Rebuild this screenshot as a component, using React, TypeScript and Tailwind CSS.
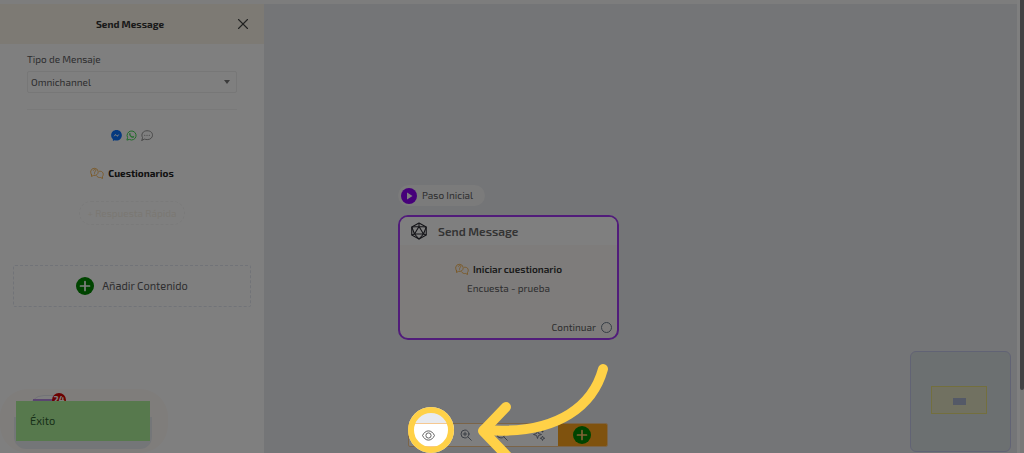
import type { ReactNode } from "react";
import { X } from "lucide-react";

const toolButton = "flex flex-1 items-center justify-center bg-white text-gray-500";

function QuestionBubbles() {
  return (
    <svg className="h-3 w-3.5 shrink-0" viewBox="0 0 28 24" fill="none" stroke="#f5ad45" strokeWidth="1.7" strokeLinejoin="round" strokeLinecap="round" aria-hidden="true">
      <path d="M3 15.5V19l4-2.2c5 1 9.500-2.300 9.500-7.300A7.700 7.700 0 0 0 1.500 8c-.3 3 .2 5.500 1.500 7.500Z" />
      <path d="M6.800 6.600c.8-2.600 5-2 4.700.6-.3 1.700-2.300 1.800-2.400 3.800M9.100 13.300v.3" />
      <path d="M19 8.500h1.500c3.500 0 6 2.700 6 6 0 1.800-.6 3.200-1.500 4.300V23l-3.600-2c-3.600.6-6.700-.6-8.200-3.300" />
    </svg>
  );
}

function PlusCircle() {
  return (
    <svg className="h-[18px] w-[18px] shrink-0" viewBox="0 0 18 18" aria-hidden="true">
      <circle cx="9" cy="9" r="9" fill="#008800" />
      <path d="M9 4.500v9M4.500 9h9" stroke="currentColor" strokeWidth="1.700" strokeLinecap="round" />
    </svg>
  );
}

function ChannelIcons() {
  return (
    <div className="flex items-center justify-center gap-1">
      <svg className="h-[11px] w-[11px]" viewBox="0 0 22 22" aria-hidden="true">
        <path d="M11 0C4.800 0 .3 4.500.3 10.500c0 3.200 1.300 5.900 3.500 7.800V22l3.300-1.400c1.200.4 2.500.6 3.900.6 6.200 0 10.700-4.600 10.700-10.700S17.200 0 11 0Z" fill="#0a72ff" />
        <path d="m4.800 13.300 3.800-5.400 3.600 3 4.800-3-3.800 5.600-3.700-3-4.700 2.800Z" fill="#fff" />
      </svg>
      <svg className="h-[11px] w-[11px]" viewBox="0 0 22 22" fill="none" aria-hidden="true">
        <path d="m1.800 20.200 1.400-5A9 9 0 1 1 6.700 18.800l-4.900 1.400Z" stroke="#43d854" strokeWidth="2" strokeLinejoin="round" />
        <path d="M7.200 6.200c.8-.8 1.500-.5 1.900.7.5 1.400.4 1.500-.4 2.600 1 1.900 2.200 2.900 3.900 3.500 1-1.300 1.200-1.400 2.500-.7 1.400.7 1.500.9.800 2.100-1.600 2.200-5 .9-7.300-1.500C6.200 10.500 5.600 7.900 7.200 6.200Z" fill="#43d854" />
      </svg>
      <svg className="h-[11px] w-3" viewBox="0 0 24 22" fill="none" stroke="#888" strokeWidth="1.800" strokeLinecap="round" strokeLinejoin="round" aria-hidden="true">
        <path d="M2 20.500 3 15C-.5 8.500 4 1.500 12 1.500S23 6 23 10.500s-4 8.700-10.500 8.700c-2 0-3.700-.3-5.200-1.100L2 20.500Z" />
        <path d="M7.500 10.500h.1M12 10.500h.1M16.500 10.500h.1" strokeWidth="2.400" />
      </svg>
    </div>
  );
}

function Icosahedron() {
  return (
    <svg className="h-[18px] w-[18px] shrink-0" viewBox="0 0 36 36" fill="none" stroke="#2b2b33" strokeWidth="2.200" strokeLinejoin="round" aria-hidden="true">
      <path d="M18 2 32.500 10v16L18 34 3.500 26V10L18 2Z" />
      <path d="m18 9 9 15H9l9-15ZM18 2v7M3.500 10 18 9l14.500 1M3.500 10 9 24l-5.500 2M32.500 10 27 24l5.500 2M9 24l9 10 9-10" />
    </svg>
  );
}

function Magnifier({ children }: { children?: ReactNode }) {
  return (
    <svg className="h-3 w-3" viewBox="0 0 24 24" fill="none" stroke="currentColor" strokeWidth="1.800" strokeLinecap="round" aria-hidden="true">
      <circle cx="10" cy="10" r="8" />
      <path d="m16 16 6.500 6.500M6.500 10h7" />
      {children}
    </svg>
  );
}

function Sidebar() {
  return (
    <aside className="relative flex w-[264px] shrink-0 flex-col bg-white">
      <header className="relative flex h-10 items-center justify-center bg-[#faf5e8] pr-1">
        <h1 className="text-[10px] font-bold text-[#333]">Send Message</h1>
        <button aria-label="Cerrar" className="absolute right-3 text-[#444]">
          <X className="h-[18px] w-[18px]" strokeWidth={1.5} />
        </button>
      </header>

      <div className="px-[27px] pt-[7px]">
        <label htmlFor="tipo" className="block text-[10px] leading-4">Tipo de Mensaje</label>
        <div className="relative mt-1">
          <select id="tipo" className="block h-[22px] w-full appearance-none rounded-xs border border-[#eee] bg-white px-[3px] text-[10px]">
            <option>Omnichannel</option>
          </select>
          <svg className="pointer-events-none absolute top-[9px] right-[7px] h-1 w-1.5" viewBox="0 0 6 4" aria-hidden="true">
            <path d="M0 0h6L3 4Z" fill="#777" />
          </svg>
        </div>
        <hr className="mt-4 border-[#f2f2f2]" />
      </div>

      <div className="mt-5">
        <ChannelIcons />
      </div>
      <h2 className="mt-6 flex items-center justify-center gap-1 text-[10px] leading-4 font-bold text-[#222]">
        <QuestionBubbles />
        Cuestionarios
      </h2>
      <button className="mx-auto mt-5 h-6 rounded-full border border-dashed border-[#f5f5f5] px-2 text-[10px] text-[#f5f0e6]">
        + Respuesta Rápida
      </button>
      <button className="mx-[13px] mt-10 flex h-[42px] items-center justify-center gap-2 rounded-xs border border-dashed border-[#e2e7f0] text-[11px]">
        <span className="text-white"><PlusCircle /></span>
        Añadir Contenido
      </button>

      {/* chat launcher, mostly hidden by the toast */}
      <div className="absolute bottom-0 left-0 h-16 w-[168px] rounded-[28px] bg-[#fffaf6]">
        <div className="absolute top-1.5 left-7 h-8 w-10 rounded-full border border-[#e4e6ec] bg-white" />
        <div className="absolute top-2.5 left-[33px] h-1 w-6 bg-[#b58ae0]" />
        <span className="absolute top-1 left-[52px] flex h-3.5 w-3.5 items-center justify-center rounded-full bg-[#d80000] text-[9px] font-bold text-white">24</span>
        <div className="absolute top-7 left-[14px] h-8 w-[138px] rounded-b-xl bg-[#e9edf1]" />
      </div>
      <div role="status" className="absolute bottom-3 left-4 flex h-10 w-[134px] items-center bg-[#aff29b] px-3.5 text-[11px] text-[#2f6030]">
        Éxito
      </div>
    </aside>
  );
}

function MessageNode() {
  return (
    <div className="absolute top-[181px] left-[134px] w-[221px]">
      <div className="flex h-[21px] w-[87px] items-center gap-[5px] rounded-full bg-[#f6f6f6] pl-[3px] text-[10px]">
        <svg className="h-4 w-4 shrink-0" viewBox="0 0 16 16" aria-hidden="true">
          <circle cx="8" cy="8" r="8" fill="#8d00f5" />
          <path d="M6 4.500v7L11.500 8Z" fill="#fff" />
        </svg>
        Paso Inicial
      </div>
      <article className="mt-[9px] flex h-[125px] flex-col overflow-hidden rounded-[10px] border-2 border-[#a338f5] bg-[#fcf9f6]">
        <header className="flex h-7 items-center gap-2.5 bg-white px-2.5">
          <Icosahedron />
          <h2 className="text-xs font-semibold text-[#666]">Send Message</h2>
        </header>
        <h3 className="mt-4 flex items-center justify-center gap-1 text-[10px] leading-4 font-semibold text-[#333]">
          <QuestionBubbles />
          Iniciar cuestionario
        </h3>
        <p className="mt-[3px] text-center text-[10px] leading-4">Encuesta - prueba</p>
        <footer className="mt-auto flex items-center justify-end gap-[5px] px-[5px] pb-[3px] text-[10px] leading-4">
          Continuar
          <span className="h-[11px] w-[11px] rounded-full border border-[#6d7c8c]" />
        </footer>
      </article>
    </div>
  );
}

function Minimap() {
  return (
    <div className="absolute right-1.5 bottom-px flex h-[101px] w-[101px] items-center justify-center rounded-md border border-[#c3c6e8] bg-[#d8e0e3] pr-[3px] pb-[3px]">
      <div className="flex h-7 w-14 items-center justify-center border border-[#e6df7c] bg-[#e2e3c3]">
        <div className="mt-0.5 h-[7px] w-[13px] bg-[#a9b3cf]" />
      </div>
    </div>
  );
}

function Toolbar() {
  return (
    <nav className="absolute inset-x-0 bottom-1.5 flex justify-center pr-0.5">
      <div className="flex h-6 w-[200px] overflow-hidden rounded-xs border border-[#f6c890] bg-white">
        <div className="flex flex-1 pl-0.5">
          <button aria-label="Vista previa" className={toolButton}>
            <svg className="h-[13px] w-[13px]" viewBox="0 0 24 24" fill="none" stroke="#555" strokeWidth="1.700" aria-hidden="true">
              <path d="M1 12c2.500-5.500 6.500-8.500 11-8.500s8.500 3 11 8.500c-2.500 5.500-6.500 8.500-11 8.500S3.500 17.500 1 12Z" />
              <circle cx="12" cy="12" r="4.800" />
            </svg>
          </button>
          <button aria-label="Acercar" className={toolButton}>
            <Magnifier><path d="M10 6.500v7" /></Magnifier>
          </button>
          <button aria-label="Alejar" className={toolButton}><Magnifier /></button>
          <button aria-label="Ordenar" className={toolButton}>
            <svg className="h-3 w-3" viewBox="0 0 24 24" fill="none" stroke="currentColor" strokeWidth="1.700" strokeLinejoin="round" aria-hidden="true">
              <path d="m9 3 2 6 6 2-6 2-2 6-2-6-6-2 6-2 2-6ZM19 14l1.200 3.300L23.500 18.500l-3.300 1.200L19 23l-1.200-3.300-3.300-1.200 3.300-1.200L19 14ZM19 2v5M16.500 4.500h5" />
            </svg>
          </button>
        </div>
        <button aria-label="Añadir" className="flex w-[49px] items-center justify-center bg-[#ffa51c] text-[#ffc46a]">
          <PlusCircle />
        </button>
      </div>
    </nav>
  );
}

// Darkens the whole page except for the preview button
function Spotlight() {
  return (
    <div className="pointer-events-none absolute inset-0 overflow-hidden">
      <div className="absolute top-[407px] left-[408px] h-[46px] w-[46px] rounded-full border-6 border-[#ffd147] shadow-[0_0_0_2000px_rgba(0,0,0,0.5)]" />
      <svg className="absolute top-[360px] left-[470px] h-[100px] w-[145px]" viewBox="470 360 145 100" fill="none" stroke="#ffd147" strokeWidth="10" strokeLinecap="round" strokeLinejoin="round" aria-hidden="true">
        <path d="M603 369C594 402 562 436 484 430" />
        <path d="m506 407-23 24 25 26" />
      </svg>
    </div>
  );
}

export default function App() {
  return (
    <div className="relative flex h-screen overflow-hidden bg-white font-['Exo_2','Noto_Sans',sans-serif] text-[#5c5c60]">
      <div className="relative flex min-w-0 flex-1 flex-col">
        <div className="h-1 bg-[#fbfbfb]" />
        <div className="flex min-h-0 flex-1">
          <Sidebar />
          <main className="relative min-w-0 flex-1 bg-[#e8eaee]">
            <MessageNode />
            <Minimap />
          </main>
        </div>
        <Toolbar />
      </div>
      <div className="ml-[3px] w-1 bg-[#f1f1f1]">
        <div className="h-[86%] rounded-b-xs bg-[#858588]" />
      </div>
      <Spotlight />
    </div>
  );
}
